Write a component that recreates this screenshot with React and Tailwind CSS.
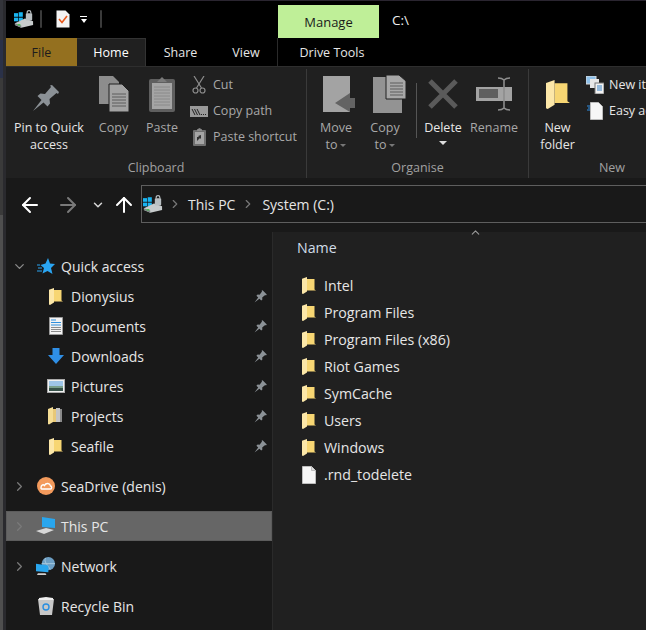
import { ChevronDown, ChevronRight, ChevronUp, ArrowLeft, ArrowRight, ArrowUp } from 'lucide-react';

const Folder = ({ className = 'w-[14px] h-[17px]' }) => (
    <svg viewBox="0 0 14 17" className={`shrink-0 ${className}`}>
        <path d="M5 2 H12.5 V12.5 L14 13.5 H5 Z" fill="#f7d673" />
        <path d="M0 1.8 L5 0 V14.5 L1 17 L0 16.5 Z" fill="#fce7a8" />
    </svg>
);

const Pin = ({ className = 'w-[13px] h-[13px]' }) => (
    <svg viewBox="0 0 13 13" className={className}>
        <path d="M0.5 12.5 L4.2 7.6 L2.4 5.8 L3.6 4.6 L5.6 4.8 L8 1.6 L7.6 0.8 L8.6 0.2 L12.8 4.4 L12 5.4 L11.2 5 L8.2 7.4 L8.4 9.4 L7.2 10.6 L5.4 8.8 Z" fill="#8b9196" />
    </svg>
);

const FileIcon = ({ className = 'w-[14px] h-[18px]' }) => (
    <svg viewBox="0 0 14 18" className={className}>
        <path d="M0.5 0.5 H9.5 L13.5 4.5 V17.5 H0.5 Z" fill="#f6f6f6" stroke="#bdbdbd" />
        <path d="M9.5 0.5 V4.5 H13.5" fill="#dcdcdc" stroke="#bdbdbd" />
    </svg>
);

const DriveIcon = ({ className = 'w-[20px] h-[19px]' }) => (
    <svg viewBox="0 0 22 20" className={`shrink-0 ${className}`}>
        <rect x="0" y="3" width="4.5" height="4" fill="#19b4f0" />
        <rect x="5.2" y="2" width="4.5" height="5" fill="#19b4f0" />
        <rect x="0" y="8" width="4.5" height="4" fill="#19b4f0" />
        <rect x="5.2" y="8" width="4.5" height="4" fill="#19b4f0" />
        <path d="M1 14 L12 9 L21 12 V16 L8 19 L1 16 Z" fill="#c7cbcc" />
        <path d="M1 14 L8 16.5 V19 L1 16 Z" fill="#7f8688" />
        <rect x="4" y="15" width="3" height="1.5" fill="#49c44c" />
        <rect x="13" y="3" width="7" height="8" rx="1" fill="#b9bfc2" />
        <path d="M14.5 3.5 V2 C14.5 -0.3 18.5 -0.3 18.5 2 V3.5" fill="none" stroke="#b9bfc2" strokeWidth="1.3" />
    </svg>
);

const SmallBtn = ({ icon, label }) => (
    <div className="flex h-[26px] items-center gap-[5px] whitespace-nowrap">
        <span className="flex w-[18px] justify-center">{icon}</span>
        <span>{label}</span>
    </div>
);

const Group = ({ label, width, border = true, children }) => (
    <div className={`flex shrink-0 flex-col ${border ? 'border-r border-[#3a3a3a]' : ''} ${width}`}>
        <div className="flex h-[88px] items-start">{children}</div>
        <div className="pt-[3px] text-center text-[#a0a0a0]">{label}</div>
    </div>
);

const LargeBtn = ({ icon, label, sub, width, caret, className = 'text-[#a8a8a8]' }) => (
    <div className={`flex shrink-0 flex-col items-center whitespace-nowrap ${width} ${className}`}>
        <div className="flex h-[50px] items-center justify-center">{icon}</div>
        <div className="leading-[17px]">{label}</div>
        <div className="flex items-center gap-[3px] leading-[17px]">
            {sub}
            {caret && <span className="mt-[1px] border-x-[3px] border-t-[3px] border-x-transparent border-t-[#777]" />}
        </div>
    </div>
);

const NavRow = ({ icon, label, chevron, pinned, selected, indent }) => (
    <div className={`flex h-[30px] items-center ${selected ? 'bg-[#666666] outline outline-1 -outline-offset-1 outline-[#5c5c5c]' : ''}`}>
        <span className="flex w-[27px] shrink-0 justify-center">
            {chevron === 'down' && <ChevronDown size={15} className="text-[#8c8c8c]" />}
            {chevron === 'right' && <ChevronRight size={15} className="text-[#7a7a7a]" />}
        </span>
        <span className={`flex w-[25px] shrink-0 justify-center ${indent ? 'ml-[10px]' : ''}`}>{icon}</span>
        <span className="ml-[3px]">{label}</span>
        {pinned && <span className="ml-auto mr-[5px]"><Pin /></span>}
    </div>
);

const files = ['Intel', 'Program Files', 'Program Files (x86)', 'Riot Games', 'SymCache', 'Users', 'Windows'];

const quick = [
    {
        label: 'Dionysius',
        icon: <Folder />,
    },
    {
        label: 'Documents',
        icon: (
            <svg viewBox="0 0 14 18" className="h-[18px] w-[14px]">
                <path d="M0.5 0.5 H13.5 V17.5 H0.5 Z" fill="#f2f2f2" stroke="#9a9a9a" />
                <path d="M2 3 H7 M2 5.5 H12 M2 8 H12" stroke="#2f8fdc" strokeWidth="1" />
                <path d="M2 10.5 H12 M2 12.5 H12 M2 14.5 H12" stroke="#8a8a8a" strokeWidth="1" />
            </svg>
        ),
    },
    {
        label: 'Downloads',
        icon: (
            <svg viewBox="0 0 16 16" className="h-[16px] w-[16px]">
                <path d="M4.5 0 H11.5 V7 H16 L8 16 L0 7 H4.5 Z" fill="#2f8fe6" />
            </svg>
        ),
    },
    {
        label: 'Pictures',
        icon: (
            <svg viewBox="0 0 18 14" className="h-[14px] w-[18px]">
                <rect x="0.5" y="0.5" width="17" height="13" fill="#f0f0f0" stroke="#aaa" />
                <rect x="2" y="2" width="14" height="5" fill="#9fc6e8" />
                <path d="M2 7 H16 V9 H2 Z" fill="#7aa08c" />
                <path d="M2 9 H16 V12 H2 Z" fill="#38534a" />
            </svg>
        ),
    },
    {
        label: 'Projects',
        icon: (
            <svg viewBox="0 0 15 18" className="h-[18px] w-[15px]">
                <path d="M0 2 L5 0 V15 L1 17.5 L0 17 Z" fill="#f5dd95" />
                <path d="M5 2 H8 V15 H5 Z" fill="#e8c877" />
                <path d="M8 1 H12 V15 H8 Z" fill="#c5c5c5" />
                <path d="M12 2 H14 V15 H12 Z" fill="#8a8a8a" />
            </svg>
        ),
    },
    {
        label: 'Seafile',
        icon: <Folder />,
    },
];

export default function App() {
    return (
        <div className="flex h-[630px] w-[646px] overflow-hidden bg-black font-['Open_Sans',sans-serif] text-[14px] text-[#e6e6e6]">
            {/* strip of the desktop behind the window */}
            <div className="flex w-[3px] shrink-0 flex-col">
                <div className="h-[40px] bg-[#33343a]" />
                <div className="h-[38px] bg-[#2a3148]" />
                <div className="h-[137px] bg-[#3a3a3a]" />
                <div className="flex-1 bg-[#4f4f4f]" />
            </div>
            <div className="w-[3px] shrink-0 bg-[#2a2a2e]" />

            <div className="flex min-w-0 flex-1 flex-col">
                {/* title bar */}
                <div className="flex h-[38px] items-start border-t border-[#2a2530] bg-black pt-[4px]">
                    <div className="flex h-[28px] w-[272px] shrink-0 items-center pl-[8px]">
                        <DriveIcon />
                        <span className="ml-[6px] h-[18px] w-[2px] rounded-sm bg-[#3a3a3a]" />
                        <svg viewBox="0 0 14 18" className="ml-[14px] h-[18px] w-[14px]">
                            <path d="M0.5 0.5 H9.5 L13.5 4.5 V17.5 H0.5 Z" fill="#f3f3f3" />
                            <path d="M3 9 L6 12.5 L11 6" fill="none" stroke="#e8591c" strokeWidth="1.6" />
                        </svg>
                        <span className="ml-[10px] flex flex-col items-center gap-[2px]">
                            <span className="h-px w-[7px] bg-white" />
                            <span className="border-x-[3.5px] border-t-[4px] border-x-transparent border-t-white" />
                        </span>
                        <span className="ml-[13px] h-[18px] w-[2px] rounded-sm bg-[#3a3a3a]" />
                    </div>
                    <div className="flex h-[33px] w-[101px] items-center justify-center bg-[#bfef98] pt-[2px] text-[13px] text-[#1a1a1a]">Manage</div>
                    <div className="ml-[13px] pt-[5px] text-[13.5px] text-[#efefef]">C:\</div>
                </div>

                {/* tabs */}
                <div className="flex h-[28px] items-stretch bg-black text-[12.5px]">
                    <div className="flex w-[71px] items-center justify-center bg-[#94701f] pt-[2px] text-[#1c1c1c]">File</div>
                    <div className="flex w-[69px] items-center justify-center border-r border-t border-[#333] bg-[#202020] pt-[1px] text-white">Home</div>
                    <div className="flex w-[69px] items-center justify-center pt-[2px]">Share</div>
                    <div className="flex w-[62px] items-center justify-center pt-[2px]">View</div>
                    <div className="flex w-[109px] items-center justify-center border-l border-[#2a2a2a] pt-[2px]">Drive Tools</div>
                </div>

                {/* ribbon */}
                <div className="flex h-[112px] items-stretch overflow-hidden border-t border-[#2e2e2e] bg-[#202020] pt-[2px] text-[12.5px]">
                    <Group label="Clipboard" width="w-[301px]">
                        <LargeBtn
                            width="w-[86px]"
                            className="text-[#e6e6e6]"
                            label="Pin to Quick"
                            sub="access"
                            icon={
                                <svg viewBox="0 0 26 26" className="mr-[6px] mt-[8px] h-[26px] w-[26px]">
                                    <path d="M0 26 L8.5 15 L4.5 11 L7.5 8.5 L12 9 L18 2 L17 0.5 L19 0 L26 7 L25 9 L23.5 8 L16.5 14 L17 18.5 L14.5 21.5 L10.5 17.5 Z" fill="#8b9196" />
                                </svg>
                            }
                        />
                        <LargeBtn
                            width="w-[43px]"
                            label="Copy"
                            icon={
                                <svg viewBox="0 0 30 36" className="h-[36px] w-[30px]">
                                    <path d="M0 0 H14 L20 6 V28 H0 Z" fill="#8d8d8d" />
                                    <path d="M10 8 H23 L30 15 V36 H10 Z" fill="#a3a3a3" stroke="#202020" />
                                    <path d="M13 18 H27 M13 21 H27 M13 24 H27 M13 27 H27 M13 30 H27" stroke="#5c5c5c" />
                                </svg>
                            }
                        />
                        <LargeBtn
                            width="w-[54px]"
                            label="Paste"
                            icon={
                                <svg viewBox="0 0 26 36" className="h-[36px] w-[26px]">
                                    <rect x="0" y="3" width="26" height="33" rx="2" fill="#5f5f5f" />
                                    <rect x="3" y="7" width="20" height="26" fill="#a5a5a5" />
                                    <path d="M8 6 L13 1 L18 6 Z" fill="#7a7a7a" />
                                    <path d="M5 11 H21 M5 14 H21 M5 17 H21 M5 20 H21 M5 23 H21 M5 26 H21 M5 29 H21" stroke="#8a8a8a" />
                                </svg>
                            }
                        />
                        <div className="ml-[1px] flex flex-col pt-[3px] text-[#a8a8a8]">
                            <SmallBtn
                                label="Cut"
                                icon={
                                    <svg viewBox="0 0 14 18" className="h-[18px] w-[14px]" fill="none" stroke="#8d8d8d" strokeWidth="1.2">
                                        <path d="M2 0 L9.5 12 M12 0 L4.5 12" />
                                        <circle cx="3.5" cy="14.5" r="2.5" />
                                        <circle cx="10.5" cy="14.5" r="2.5" />
                                    </svg>
                                }
                            />
                            <SmallBtn
                                label="Copy path"
                                icon={
                                    <svg viewBox="0 0 18 11" className="h-[11px] w-[18px]">
                                        <rect width="18" height="11" fill="#9a9a9a" />
                                        <path d="M2 3 L5 9 M4.5 3 L7.5 9 M7 3 L10 9" stroke="#222" />
                                        <path d="M11 8.5 H16" stroke="#222" strokeDasharray="1 1" />
                                    </svg>
                                }
                            />
                            <SmallBtn
                                label="Paste shortcut"
                                icon={
                                    <svg viewBox="0 0 13 18" className="h-[18px] w-[13px]">
                                        <rect y="2" width="13" height="16" rx="1" fill="#6f6f6f" />
                                        <rect x="2" y="4" width="9" height="12" fill="#a5a5a5" />
                                        <path d="M4 1.5 L6.5 0 L9 1.5 V3 H4 Z" fill="#888" />
                                        <path d="M4 13 V9 H8 M8 7 V11 L5 8" fill="#333" />
                                    </svg>
                                }
                            />
                        </div>
                    </Group>

                    <Group label="Organise" width="w-[222px]">
                        <LargeBtn
                            width="w-[58px]"
                            label="Move"
                            sub="to"
                            caret
                            icon={
                                <svg viewBox="0 0 33 36" className="ml-[6px] h-[36px] w-[33px]">
                                    <path d="M0 0 H27 V36 H0 Z" fill="#a3a3a3" />
                                    <path d="M12 27 L27 17 V22 H32 V32 H27 V36 Z" fill="#636363" />
                                </svg>
                            }
                        />
                        <LargeBtn
                            width="w-[40px]"
                            label="Copy"
                            sub="to"
                            caret
                            icon={
                                <svg viewBox="0 0 33 38" className="ml-[9px] h-[38px] w-[33px]">
                                    <path d="M0 2 H29 V38 H0 Z" fill="#939393" />
                                    <path d="M13 0 H26 L33 6 V24 H13 Z" fill="#a8a8a8" stroke="#202020" />
                                    <path d="M17 8 H30 M17 11 H30 M17 14 H30 M17 17 H30 M17 20 H30" stroke="#5c5c5c" />
                                </svg>
                            }
                        />
                        <div className="ml-[11px] mt-[14px] h-[55px] w-px bg-[#555]" />
                        <LargeBtn
                            width="w-[52px]"
                            className="text-[#e6e6e6]"
                            label="Delete"
                            sub={<span className="mt-[5px] border-x-[4px] border-t-[4px] border-x-transparent border-t-[#ddd]" />}
                            icon={
                                <svg viewBox="0 0 30 30" className="h-[30px] w-[30px]">
                                    <path d="M2 2 L28 28 M28 2 L2 28" stroke="#5a5a5a" strokeWidth="5" />
                                </svg>
                            }
                        />
                        <LargeBtn
                            width="w-[50px]"
                            label="Rename"
                            icon={
                                <svg viewBox="0 0 36 34" className="h-[34px] w-[36px]">
                                    <rect y="10" width="36" height="14" fill="#a3a3a3" />
                                    <rect x="3" y="12" width="19" height="9" fill="#5f5f5f" />
                                    <path d="M22 1 C24 1 26 1 28 3 C30 1 32 1 34 1 M28 3 V31 M22 33 C24 33 26 33 28 31 C30 33 32 33 34 33" fill="none" stroke="#8d8d8d" strokeWidth="1.6" />
                                </svg>
                            }
                        />
                    </Group>

                    <Group label="New" width="w-[166px]" border={false}>
                        <LargeBtn
                            width="w-[57px]"
                            className="text-[#e6e6e6]"
                            label="New"
                            sub="folder"
                            icon={<Folder className="h-[35px] w-[24px]" />}
                        />
                        <div className="flex flex-col pt-[3px]">
                            <SmallBtn
                                label="New item"
                                icon={
                                    <svg viewBox="0 0 18 18" className="h-[18px] w-[18px]">
                                        <rect x="0" y="0" width="10" height="8" fill="#8fc1ea" stroke="#ddd" />
                                        <rect x="4" y="3" width="9" height="9" fill="#e8e8e8" />
                                        <rect x="9" y="7" width="9" height="11" fill="#f2f2f2" stroke="#777" />
                                        <path d="M11 10 H16 M11 12 H16 M11 14 H16" stroke="#3b82c4" />
                                    </svg>
                                }
                            />
                            <SmallBtn
                                label="Easy access"
                                icon={
                                    <svg viewBox="0 0 16 18" className="h-[18px] w-[16px]">
                                        <path d="M3.5 0.5 H11.5 L15.5 4.5 V17.5 H3.5 Z" fill="#f6f6f6" stroke="#bbb" />
                                        <path d="M0 4 H3 M1 6 H3 M0 8 H3" stroke="#2f8fe6" />
                                    </svg>
                                }
                            />
                        </div>
                    </Group>
                </div>

                {/* address bar */}
                <div className="flex h-[54px] items-center bg-[#191919]">
                    <ArrowLeft size={24} strokeWidth={2} className="ml-[12px] shrink-0 text-white" />
                    <ArrowRight size={24} strokeWidth={2} className="ml-[14px] shrink-0 text-[#7a7a7a]" />
                    <ChevronDown size={14} strokeWidth={2.5} className="ml-[11px] shrink-0 text-[#d8d8d8]" />
                    <ArrowUp size={24} strokeWidth={2} className="ml-[7px] shrink-0 text-white" />
                    <div className="mb-[2px] ml-[5px] flex h-[38px] flex-1 items-center border border-r-0 border-[#5e5e5e] pl-[1px]">
                        <DriveIcon />
                        <ChevronRight size={14} className="ml-[5px] shrink-0 text-[#777]" />
                        <span className="ml-[6px]">This PC</span>
                        <ChevronRight size={14} className="ml-[6px] shrink-0 text-[#777]" />
                        <span className="ml-[7px]">System (C:)</span>
                    </div>
                </div>

                {/* body */}
                <div className="flex min-h-0 flex-1 bg-[#191919]">
                    <nav className="w-[266px] shrink-0 pt-[19px] text-[#e6e6e6]">
                        <NavRow chevron="down" label="Quick access" icon={
                            <svg viewBox="0 0 18 16" className="h-[16px] w-[18px]">
                                <path d="M11 0 L13 5.5 L18 6 L14 10 L15.5 16 L10.5 13 L5.5 15.5 L7 10 L3.5 7 L8.5 5.5 Z" fill="#2aa5f2" />
                                <path d="M0 7 H3 M1 10 H5 M0 13 H5" stroke="#2aa5f2" />
                            </svg>
                        } />
                        {quick.map((q) => (
                            <NavRow key={q.label} indent pinned label={q.label} icon={q.icon} />
                        ))}
                        <div className="h-[10px]" />
                        <NavRow chevron="right" label="SeaDrive (denis)" icon={
                            <svg viewBox="0 0 18 18" className="h-[18px] w-[18px]">
                                <circle cx="9" cy="9" r="9" fill="#f39a5c" />
                                <path d="M4 11 C4 8 6 7 7.5 8.5 C9 5.5 13 6 13.5 9 C15 9 15 12 13.5 12 H5 C4.5 12 4 11.5 4 11 Z" fill="none" stroke="#fff" strokeWidth="1.4" />
                            </svg>
                        } />
                        <div className="h-[10px]" />
                        <NavRow chevron="right" selected label="This PC" icon={
                            <svg viewBox="0 0 20 18" className="h-[18px] w-[20px]">
                                <path d="M6 0 L19 2 V11 L6 10 Z" fill="#29a6ee" />
                                <path d="M0 14 L10 11 L18 13 L8 17 Z" fill="#d8d8d8" />
                            </svg>
                        } />
                        <div className="h-[10px]" />
                        <NavRow chevron="right" label="Network" icon={
                            <svg viewBox="0 0 20 20" className="h-[19px] w-[19px]">
                                <circle cx="13" cy="7" r="7" fill="#6d9fc4" />
                                <path d="M10 1 C8 5 12 8 15 13 M6 7 H20" fill="none" stroke="#a9c9dd" />
                                <path d="M0 7 L13 9 V16 L0 15 Z" fill="#29a6ee" />
                                <path d="M2 17 H10 L11 19 H1 Z" fill="#d0d0d0" />
                            </svg>
                        } />
                        <div className="h-[10px]" />
                        <NavRow label="Recycle Bin" icon={
                            <svg viewBox="0 0 16 18" className="h-[18px] w-[16px]">
                                <path d="M0 2 H16 L14 18 H2 Z" fill="#c8c8c8" />
                                <path d="M1 1 L8 0 L15 1 L15 3 H1 Z" fill="#efefef" />
                                <circle cx="8" cy="10" r="3" fill="none" stroke="#2a8fe0" strokeWidth="1.4" />
                            </svg>
                        } />
                    </nav>

                    <main className="relative flex-1 border-l border-[#2a2a2a] bg-[#202020] pl-[24px] pt-[5px] text-[14.2px]">
                        <ChevronUp size={13} className="absolute left-[196px] top-[-6px] text-[#9a9a9a]" />
                        <div className="mb-[15px] h-[20px] text-[#d0dce8]">Name</div>
                        {files.map((f) => (
                            <div key={f} className="flex h-[27px] items-center gap-[8px] pl-[5px]">
                                <Folder />
                                <span>{f}</span>
                            </div>
                        ))}
                        <div className="flex h-[27px] items-center gap-[8px] pl-[5px]">
                            <FileIcon />
                            <span>.rnd_todelete</span>
                        </div>
                    </main>
                </div>
            </div>
        </div>
    );
}
